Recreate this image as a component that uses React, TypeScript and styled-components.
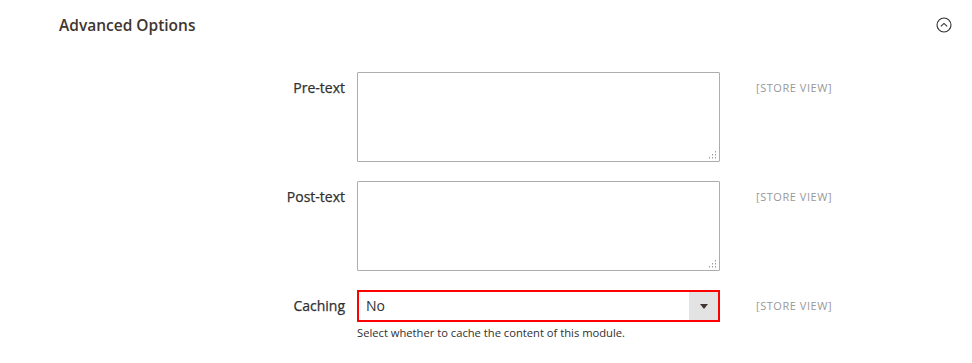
import React from "react";
import styled, { createGlobalStyle } from "styled-components";

const Global = createGlobalStyle`
  html, body { margin: 0; padding: 0; background: #fff; }
  body { font-family: "Open Sans", "Noto Sans", sans-serif; color: #303030; }
`;

const Section = styled.section`
  width: 972px;
  height: 363px;
  overflow: hidden;
  box-sizing: border-box;
`;

const Header = styled.div`
  display: flex;
  align-items: center;
  justify-content: space-between;
  padding: 12px 20px 0 59px;
  height: 26px;
`;

const Title = styled.h2`
  margin: 0;
  font-size: 15.5px;
  font-weight: 600;
  color: #41362f;
  line-height: 22px;
`;

const Toggle = styled.svg`
  width: 16px;
  height: 16px;
  display: block;
`;

const Form = styled.div`
  display: grid;
  grid-template-columns: 345px 363px 1fr;
  column-gap: 12px;
  row-gap: 19px;
  padding-top: 34px;
  & > *:nth-child(3n) { padding-left: 24px; }
`;

const Label = styled.label`
  text-align: right;
  font-size: 14px;
  font-weight: 400;
  color: #303030;
  line-height: 19px;
  padding-top: 6px;
  -webkit-text-stroke: 0.25px #303030;
`;

const Control = styled.div`
  position: relative;
  display: flex;
  flex-direction: column;
`;

const TextArea = styled.textarea`
  box-sizing: border-box;
  width: 363px;
  height: 90px;
  border: 1px solid #adadad;
  border-radius: 1px;
  resize: none;
  margin: 0;
  font-family: inherit;
  font-size: 14px;
  outline: none;
`;

const Grip = styled.svg`
  position: absolute;
  right: 3px;
  bottom: 3px;
  width: 8px;
  height: 8px;
`;

const SelectBox = styled.div`
  box-sizing: border-box;
  width: 363px;
  height: 32px;
  border: 2px solid #f00;
  display: flex;
  align-items: stretch;
  background: #fff;
`;

const SelectValue = styled.div`
  flex: 1;
  font-size: 14px;
  line-height: 28px;
  padding-left: 7px;
  color: #303030;
`;

const Arrow = styled.div`
  width: 29px;
  background: #e3e3e3;
  display: flex;
  align-items: center;
  justify-content: center;
`;

const Note = styled.div`
  font-size: 11.2px;
  line-height: 16px;
  margin-top: 3px;
  color: #303030;
`;

const Scope = styled.div`
  font-size: 11px;
  color: #999;
  line-height: 19px;
  padding-top: 6px;
  letter-spacing: 0.55px;
`;

const GripIcon = () => (
  <Grip viewBox="0 0 8 8">
    <g fill="#9a9a9a">
      <rect x="6" y="0" width="1" height="1" />
      <rect x="3" y="3" width="1" height="1" />
      <rect x="6" y="3" width="1" height="1" />
      <rect x="0" y="6" width="1" height="1" />
      <rect x="3" y="6" width="1" height="1" />
      <rect x="6" y="6" width="1" height="1" />
      <rect x="6" y="1" width="1" height="1" fill="#cfcfcf" />
      <rect x="3" y="4" width="1" height="1" fill="#cfcfcf" />
      <rect x="6" y="4" width="1" height="1" fill="#cfcfcf" />
      <rect x="0" y="7" width="1" height="1" fill="#cfcfcf" />
      <rect x="3" y="7" width="1" height="1" fill="#cfcfcf" />
      <rect x="6" y="7" width="1" height="1" fill="#cfcfcf" />
    </g>
  </Grip>
);

export default function App() {
  return (
    <>
      <Global />
      <Section>
        <Header>
          <Title>Advanced Options</Title>
          <Toggle viewBox="0 0 16 16">
            <circle cx="8" cy="8" r="7" fill="none" stroke="#303030" strokeWidth="1.1" />
            <path d="M4.8 9.3 L8 6.4 L11.2 9.3" fill="none" stroke="#303030" strokeWidth="1.1" />
          </Toggle>
        </Header>
        <Form>
          <Label>Pre-text</Label>
          <Control>
            <TextArea />
            <GripIcon />
          </Control>
          <Scope>[STORE VIEW]</Scope>

          <Label>Post-text</Label>
          <Control>
            <TextArea />
            <GripIcon />
          </Control>
          <Scope>[STORE VIEW]</Scope>

          <Label>Caching</Label>
          <Control>
            <SelectBox>
              <SelectValue>No</SelectValue>
              <Arrow>
                <svg width="8" height="5" viewBox="0 0 8 5">
                  <path d="M0 0 H8 L4 5 Z" fill="#41362f" />
                </svg>
              </Arrow>
            </SelectBox>
            <Note>Select whether to cache the content of this module.</Note>
          </Control>
          <Scope>[STORE VIEW]</Scope>
        </Form>
      </Section>
    </>
  );
}
